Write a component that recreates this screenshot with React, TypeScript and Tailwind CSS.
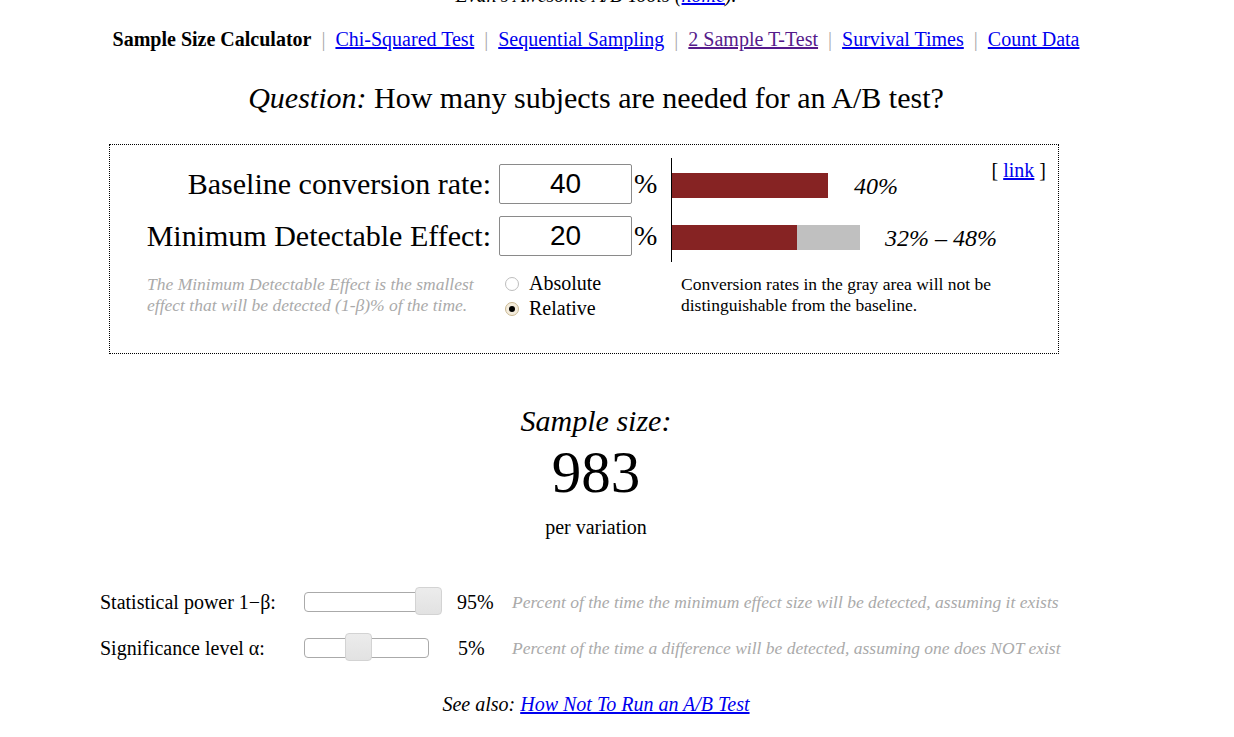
import React from "react";

const serif = { fontFamily: '"Liberation Serif", "Times New Roman", serif' };

function Sep() {
  return <span className="mx-[10px] text-[#aaaaaa]">|</span>;
}

function Slider({ width, handleLeft }: { width: number; handleLeft: number }) {
  return (
    <div className="relative h-[20px] rounded-[4px] border border-[#aaaaaa] bg-white" style={{ width }}>
      <div
        className="absolute top-[-6px] h-[28px] w-[27px] rounded-[4px] border border-[#d3d3d3] bg-gradient-to-b from-[#ececec] to-[#e2e2e2]"
        style={{ left: handleLeft }}
      />
    </div>
  );
}

function Radio({ checked }: { checked?: boolean }) {
  return checked ? (
    <span className="flex h-[14px] w-[14px] items-center justify-center rounded-full border border-[#c9b892] bg-[#f4ecdc]">
      <span className="h-[6px] w-[6px] rounded-full bg-black" />
    </span>
  ) : (
    <span className="h-[14px] w-[14px] rounded-full border border-[#bdbdbd] bg-white" />
  );
}

export default function App() {
  return (
    <div className="w-[1192px] text-black bg-white" style={serif}>
      <div className="mt-[-17px] h-[24px] text-center text-[20px] leading-[24px] italic">
        Evan's Awesome A/B Tools (<a className="text-[#0000ee] underline">home</a>).
      </div>

      <div className="mt-[20px] text-center text-[20px] leading-[24px]">
        <b>Sample Size Calculator</b>
        <Sep />
        <a className="text-[#0000ee] underline">Chi-Squared Test</a>
        <Sep />
        <a className="text-[#0000ee] underline">Sequential Sampling</a>
        <Sep />
        <a className="text-[#551a8b] underline">2 Sample T-Test</a>
        <Sep />
        <a className="text-[#0000ee] underline">Survival Times</a>
        <Sep />
        <a className="text-[#0000ee] underline">Count Data</a>
      </div>

      <div className="mt-[31px] text-center text-[30px] leading-[32px]">
        <i>Question:</i> How many subjects are needed for an A/B test?
      </div>

      <div className="relative ml-[109px] mt-[30px] h-[210px] w-[950px] border border-dotted border-black pt-[13px]">
        <div className="absolute right-[12px] top-[13px] text-[20px] leading-[24px]">
          [ <a className="text-[#0000ee] underline">link</a> ]
        </div>

        <div className="flex items-center">
          <div className="flex flex-col gap-[12px]">
            <div className="flex h-[40px] items-center">
              <div className="w-[381px] text-right text-[30px] leading-[32px]">Baseline conversion rate:</div>
              <input
                readOnly
                value="40"
                className="ml-[8px] h-[40px] w-[133px] rounded-[2px] border border-[#8a8a8a] bg-white text-center text-[28px] text-black outline-none"
                style={{ fontFamily: '"Liberation Sans", Arial, sans-serif' }}
              />
              <span className="ml-[2px] w-[37px] text-[28px] leading-[32px]">%</span>
            </div>
            <div className="flex h-[40px] items-center">
              <div className="w-[381px] text-right text-[30px] leading-[32px]">Minimum Detectable Effect:</div>
              <input
                readOnly
                value="20"
                className="ml-[8px] h-[40px] w-[133px] rounded-[2px] border border-[#8a8a8a] bg-white text-center text-[28px] text-black outline-none"
                style={{ fontFamily: '"Liberation Sans", Arial, sans-serif' }}
              />
              <span className="ml-[2px] w-[37px] text-[28px] leading-[32px]">%</span>
            </div>
          </div>

          <div className="flex flex-col gap-[27px] border-l border-black pb-[12px] pt-[15px]">
            <div className="flex h-[25px] items-center">
              <div className="h-[25px] w-[156px] bg-[#862323]" />
              <span className="ml-[26px] text-[24px] italic leading-[28px]" style={serif}>40%</span>
            </div>
            <div className="flex h-[25px] items-center">
              <div className="h-[25px] w-[125px] bg-[#862323]" />
              <div className="h-[25px] w-[63px] bg-[#c0c0c0]" />
              <span className="ml-[25px] text-[24px] italic leading-[28px]" style={serif}>32% – 48%</span>
            </div>
          </div>
        </div>

        <div className="mt-[9px] flex items-start">
          <div className="ml-[37px] w-[352px] pt-[3px] text-[17.5px] italic leading-[21px] text-[#aaaaaa]">
            The Minimum Detectable Effect is the smallest
            <br />
            effect that will be detected (1-β)% of the time.
          </div>
          <div className="w-[172px] pl-[6px] text-[20px] leading-[25px]">
            <div className="flex items-center gap-[10px]">
              <Radio />
              <span>Absolute</span>
            </div>
            <div className="flex items-center gap-[10px]">
              <Radio checked />
              <span>Relative</span>
            </div>
          </div>
          <div className="pl-[10px] pt-[3px] text-[17.5px] leading-[21px]">
            Conversion rates in the gray area will not be
            <br />
            distinguishable from the baseline.
          </div>
        </div>
      </div>

      <div className="mt-[50px] text-center text-[30px] italic leading-[34px]">Sample size:</div>
      <div className="mt-[2px] text-center text-[59px] leading-[64px]">983</div>
      <div className="mt-[11px] text-center text-[20px] leading-[24px]">per variation</div>

      <div className="ml-[100px] mt-[40px]">
        <div className="flex h-[46px] items-center">
          <div className="w-[204px] text-[20px]">Statistical power 1−β:</div>
          <div className="w-[153px]">
            <Slider width={125} handleLeft={110} />
          </div>
          <div className="w-[55px] text-[20px]">95%</div>
          <div className="text-[17.5px] italic text-[#aaaaaa]">
            Percent of the time the minimum effect size will be detected, assuming it exists
          </div>
        </div>
        <div className="flex h-[46px] items-center">
          <div className="w-[204px] text-[20px]">Significance level α:</div>
          <div className="w-[154px]">
            <Slider width={125} handleLeft={40} />
          </div>
          <div className="w-[54px] text-[20px]">5%</div>
          <div className="text-[17.5px] italic text-[#aaaaaa]">
            Percent of the time a difference will be detected, assuming one does NOT exist
          </div>
        </div>
      </div>

      <div className="mt-[21px] text-center text-[20px] italic leading-[24px]">
        See also: <a className="text-[#0000ee] underline">How Not To Run an A/B Test</a>
      </div>
    </div>
  );
}
